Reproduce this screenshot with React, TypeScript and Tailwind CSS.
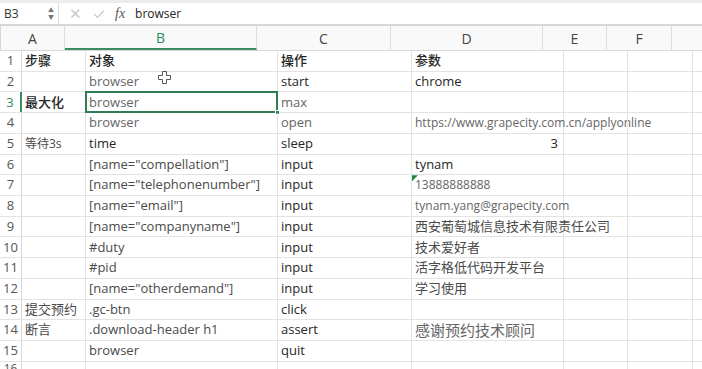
import React from "react";

type Cell = { t: string; c?: string; right?: boolean };

const colWidths = ["w-[64px]", "w-[192px]", "w-[134px]", "w-[152px]", "w-[64px]", "w-[65px]", "w-[40px]"];
const letters = ["A", "B", "C", "D", "E", "F", ""];

const dark = "text-[#262626] font-medium";
const mid = "text-[#4a4a4a]";
const light = "text-[#666666]";

const rows: Cell[][] = [
  [{ t: "步骤", c: dark }, { t: "对象", c: dark }, { t: "操作", c: dark }, { t: "参数", c: dark }],
  [{ t: "" }, { t: "browser", c: light }, { t: "start", c: dark }, { t: "chrome", c: dark }],
  [{ t: "最大化", c: dark }, { t: "browser", c: light }, { t: "max", c: light }, { t: "" }],
  [{ t: "" }, { t: "browser", c: light }, { t: "open", c: light }, { t: "https://www.grapecity.com.cn/applyonline", c: light + " text-[12px]" }],
  [{ t: "等待3s", c: mid + " text-[12px]" }, { t: "time", c: dark }, { t: "sleep", c: dark }, { t: "3", c: dark, right: true }],
  [{ t: "" }, { t: "[name=\"compellation\"]", c: mid }, { t: "input", c: dark }, { t: "tynam", c: dark }],
  [{ t: "" }, { t: "[name=\"telephonenumber\"]", c: mid }, { t: "input", c: dark }, { t: "13888888888", c: light + " text-[12px]" }],
  [{ t: "" }, { t: "[name=\"email\"]", c: mid }, { t: "input", c: dark }, { t: "tynam.yang@grapecity.com", c: light + " text-[12px]" }],
  [{ t: "" }, { t: "[name=\"companyname\"]", c: mid }, { t: "input", c: dark }, { t: "西安葡萄城信息技术有限责任公司", c: mid }],
  [{ t: "" }, { t: "#duty", c: mid }, { t: "input", c: dark }, { t: "技术爱好者", c: mid }],
  [{ t: "" }, { t: "#pid", c: mid }, { t: "input", c: dark }, { t: "活字格低代码开发平台", c: mid }],
  [{ t: "" }, { t: "[name=\"otherdemand\"]", c: mid }, { t: "input", c: dark }, { t: "学习使用", c: mid }],
  [{ t: "提交预约", c: mid }, { t: ".gc-btn", c: mid }, { t: "click", c: dark }, { t: "" }],
  [{ t: "断言", c: mid }, { t: ".download-header h1", c: mid }, { t: "assert", c: dark }, { t: "感谢预约技术顾问", c: light + " text-[15px]" }],
  [{ t: "" }, { t: "browser", c: mid }, { t: "quit", c: dark }, { t: "" }],
];

const CellCursor = () => (
  <svg width="13" height="13" viewBox="0 0 13 13" className="absolute left-[72px] top-[-1px]">
    <path
      d="M4.5 0.5h4v4h4v4h-4v4h-4v-4h-4v-4h4z"
      fill="#ffffff"
      stroke="#555555"
      strokeWidth="1"
    />
  </svg>
);

export default function App() {
  return (
    <div
      className="w-[702px] h-[369px] overflow-hidden bg-white text-[13px]"
      style={{ fontFamily: '"Open Sans", "Noto Sans CJK SC", sans-serif' }}
    >
      {/* formula bar */}
      <div className="h-[3px] bg-[#ececec]" />
      <div className="h-[23px] flex items-center border-b-2 border-[#d6d6d6] bg-white">
        <div className="w-[59px] h-full flex items-center justify-between pl-[4px] pr-[4px] border-r border-[#dcdcdc]">
          <span className="text-[12px] text-[#333]">B3</span>
          <span className="flex flex-col text-[6px] leading-[7px] text-[#777]">
            <span>▲</span>
            <span>▼</span>
          </span>
        </div>
        <span className="ml-[10px] text-[15px] text-[#c8c8c8] leading-none">✕</span>
        <svg width="12" height="10" viewBox="0 0 12 10" className="ml-[11px]">
          <path d="M1 5l3.5 3.5L11 1.5" fill="none" stroke="#c8c8c8" strokeWidth="1.2" />
        </svg>
        <span
          className="ml-[10px] text-[14px] italic text-[#555]"
          style={{ fontFamily: '"Liberation Serif", serif' }}
        >
          fx
        </span>
        <span className="ml-[10px] text-[12px] text-[#222]">browser</span>
      </div>

      {/* column headers */}
      <div className="h-[25px] flex bg-[#f9f9f9] border-b border-[#d8d8d8]">
        <div className="w-[22px] h-full relative border-r border-[#d8d8d8]">
          <div
            className="absolute right-[2px] bottom-[2px] w-[15px] h-[15px] bg-[#dcdcdc]"
            style={{ clipPath: "polygon(100% 0, 100% 100%, 0 100%)" }}
          />
        </div>
        {letters.map((l, i) => (
          <div
            key={i}
            className={`${colWidths[i]} shrink-0 h-full flex items-center justify-center border-r border-[#dcdcdc] text-[14px] ${
              i === 1 ? "text-[#2f8a58] border-b-2 border-b-[#3a8f62]" : "text-[#444]"
            }`}
          >
            {l}
          </div>
        ))}
      </div>

      {/* rows */}
      {rows.map((r, ri) => (
        <div key={ri} className="h-[20.73px] flex border-b border-[#e3e3e3]">
          <div
            className={`w-[22px] shrink-0 h-full flex items-center justify-center border-r ${
              ri === 2 ? "text-[#2f8a58] border-r-2 border-[#3a8f62]" : "text-[#555] border-[#d8d8d8]"
            }`}
          >
            {ri + 1}
          </div>
          {colWidths.map((w, ci) => {
            const cell = r[ci];
            return (
              <div
                key={ci}
                className={`${w} shrink-0 h-full relative flex items-center px-[3px] border-r border-[#e3e3e3] whitespace-nowrap ${
                  cell?.right ? "justify-end pr-[5px]" : ""
                } ${cell?.c ?? ""}`}
              >
                {cell?.t}
                {ri === 1 && ci === 1 && <CellCursor />}
                {ri === 2 && ci === 1 && (
                  <>
                    <div className="absolute inset-[-1px] border-2 border-[#2e7d52]" />
                    <div className="absolute right-[-3px] bottom-[-3px] w-[5px] h-[5px] bg-[#2e7d52] border border-white" />
                  </>
                )}
                {ri === 6 && ci === 3 && (
                  <div
                    className="absolute left-0 top-0 w-[6px] h-[6px] bg-[#1e8a3c]"
                    style={{ clipPath: "polygon(0 0, 100% 0, 0 100%)" }}
                  />
                )}
              </div>
            );
          })}
        </div>
      ))}
      <div className="h-[20px] flex">
        <div className="w-[22px] shrink-0 h-full flex items-start justify-center border-r border-[#d8d8d8] text-[#555] text-[12px] leading-[14px]">
          16
        </div>
        {colWidths.map((w, ci) => (
          <div key={ci} className={`${w} shrink-0 h-full border-r border-[#e3e3e3]`} />
        ))}
      </div>
    </div>
  );
}
